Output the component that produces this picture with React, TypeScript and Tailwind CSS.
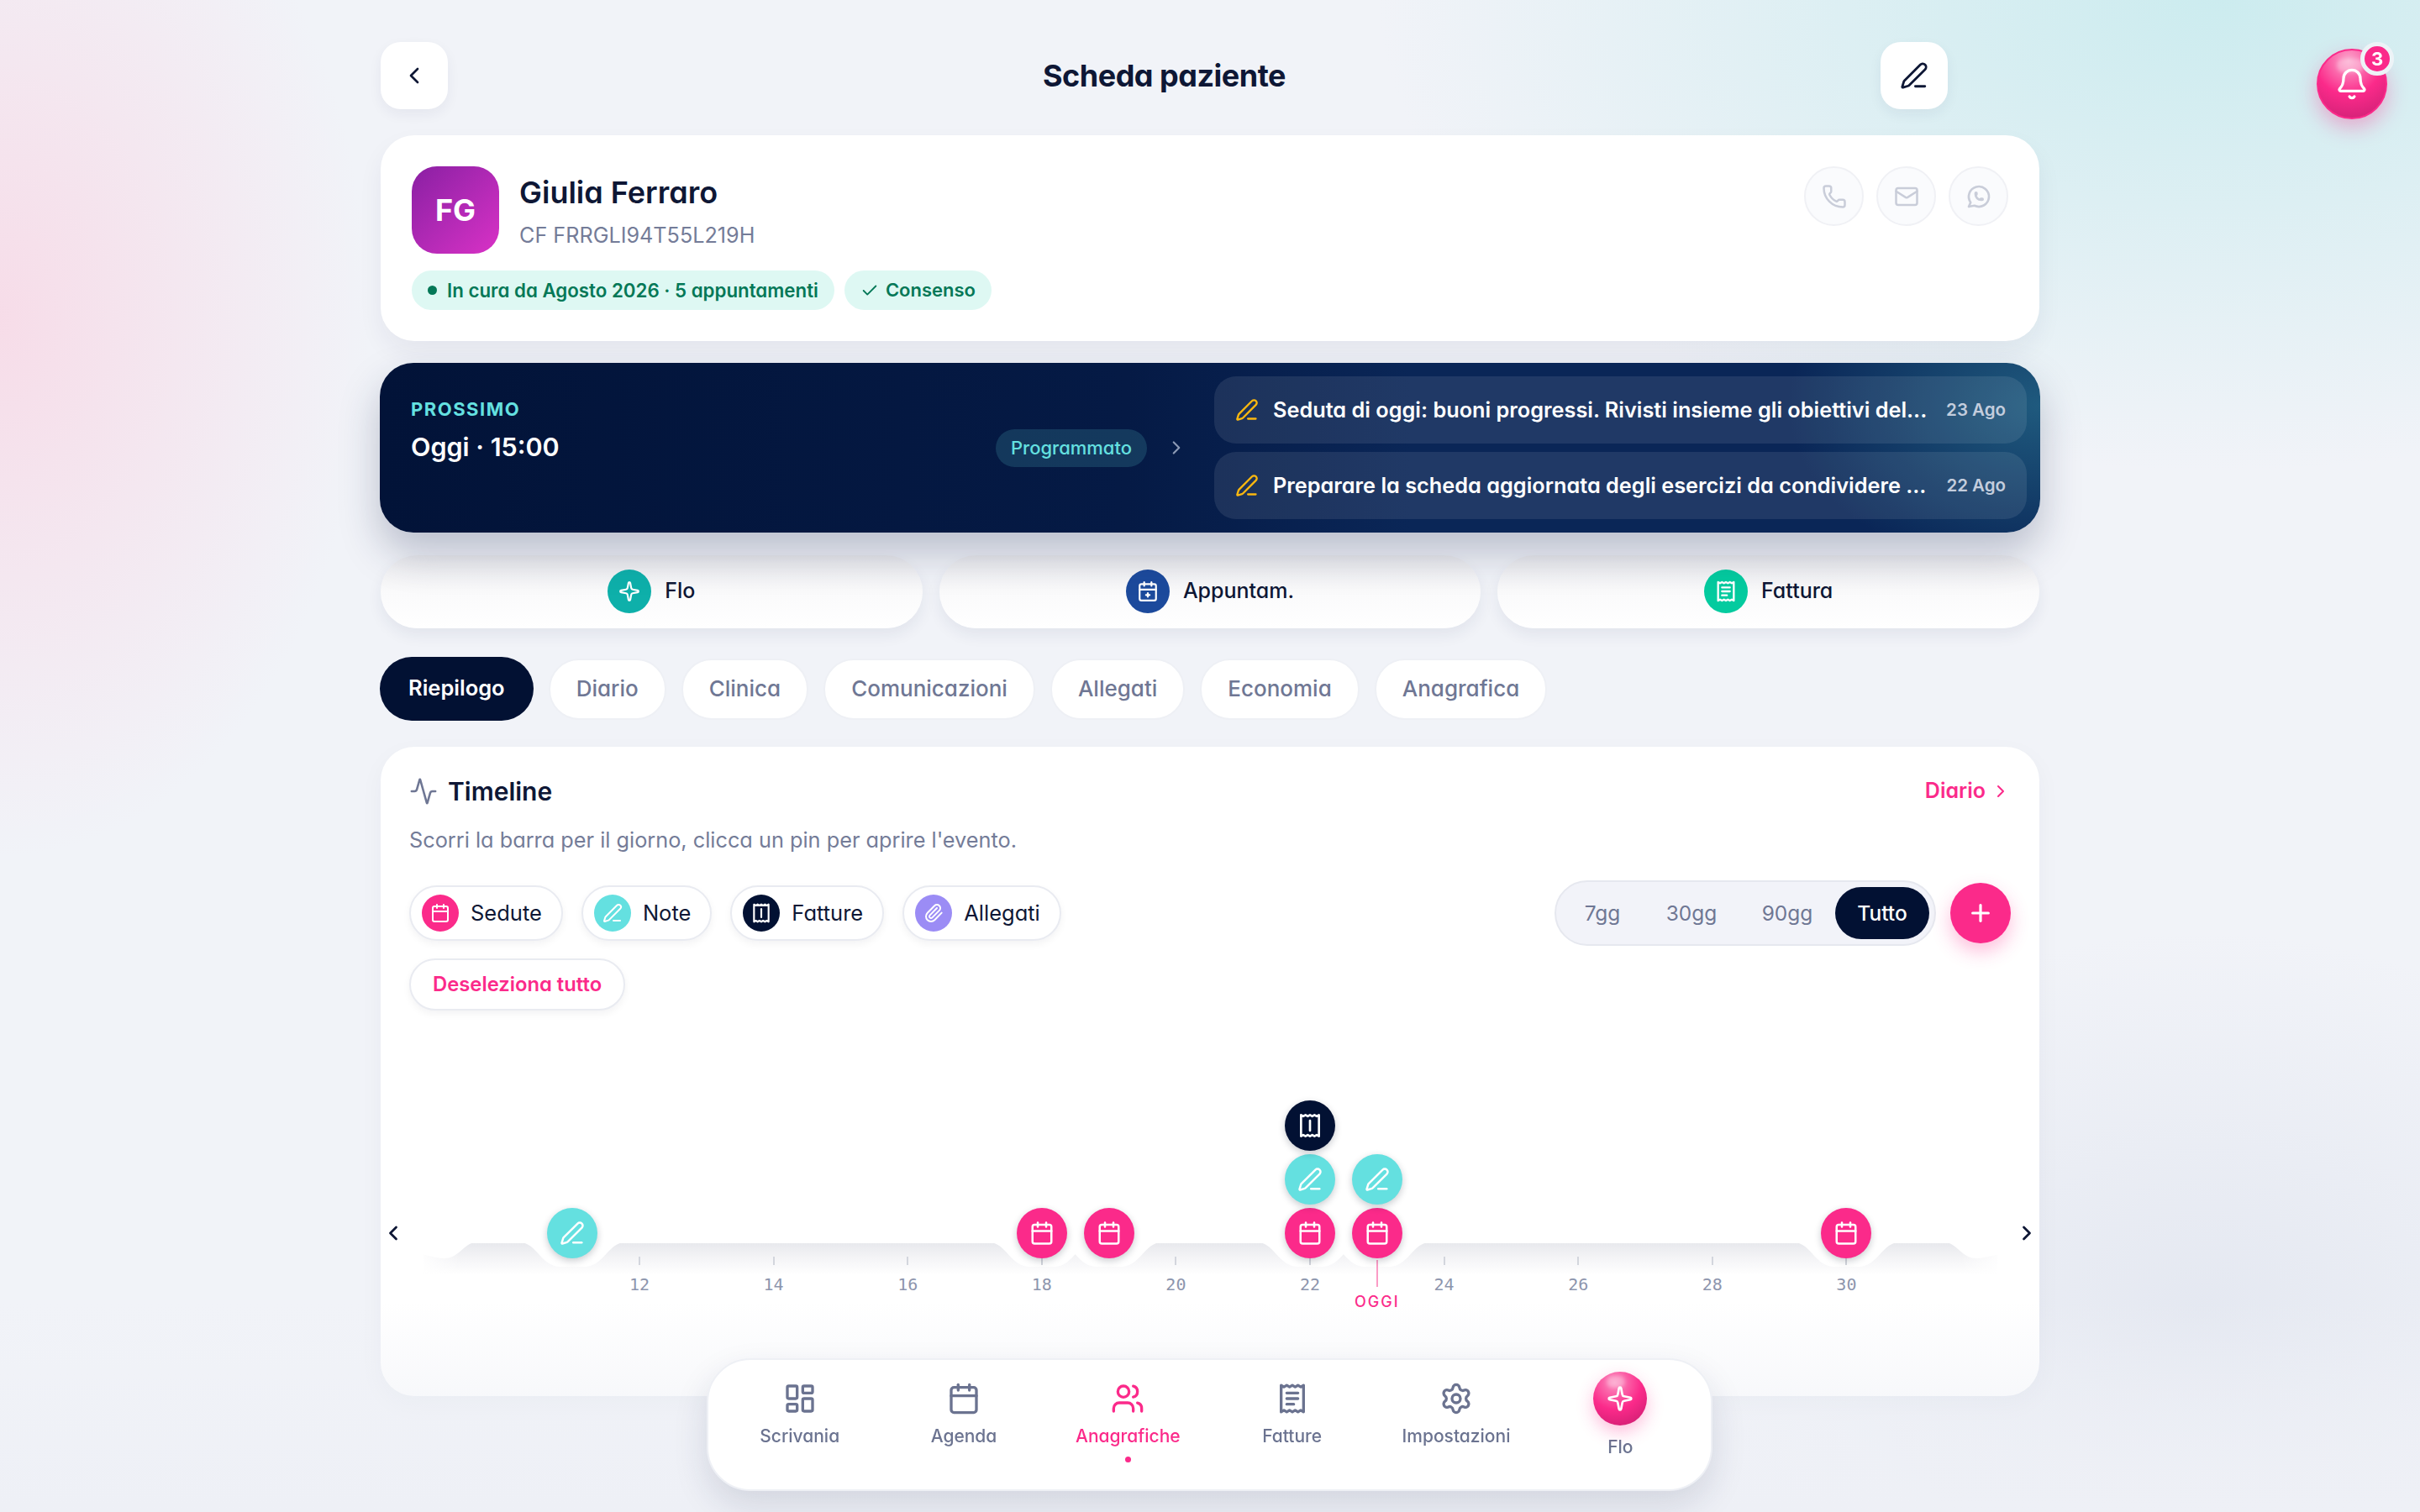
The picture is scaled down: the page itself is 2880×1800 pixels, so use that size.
import React from 'react';
import {
    Activity, Bell, Calendar, CalendarPlus2, Check, ChevronLeft, ChevronRight, LayoutDashboard, Mail,
    Paperclip, PenLine, Phone, Plus, Settings, Sparkle, Users,
} from 'lucide-react';
import { TbBrandWhatsapp } from 'react-icons/tb';

const DAYS = [12, 14, 16, 18, 20, 22, 24, 26, 28, 30];
const DAY_WIDTH = 79.8;
const DAY_ZERO_X = 761 - 12 * DAY_WIDTH - 453;

type Kind = 'cal' | 'note' | 'bill';

const PINS: { day: number; stack: Kind[] }[] = [
    { day: 11, stack: ['note'] },
    { day: 18, stack: ['cal'] },
    { day: 19, stack: ['cal'] },
    { day: 22, stack: ['cal', 'note', 'bill'] },
    { day: 23, stack: ['cal', 'note'] },
    { day: 30, stack: ['cal'] },
];

const dayX = (day: number) => DAY_ZERO_X + day * DAY_WIDTH;

// Receipt with zigzag top and bottom: a single bar, or text lines
function Receipt({ size, lines }: { size: number; lines?: boolean }) {
    return (
        <svg width={size} height={size} viewBox="0 0 24 24" fill="none" stroke="currentColor" strokeWidth={2} strokeLinejoin="round" strokeLinecap="round">
            <path d="M4 2.5l2 1.2 2-1.2 2 1.2 2-1.2 2 1.2 2-1.2 2 1.2 2-1.2V21.5l-2-1.2-2 1.2-2-1.2-2 1.2-2-1.2-2 1.2-2-1.2-2 1.2Z" />
            {lines ? <path d="M8 8h8M8 12h8M8 16h5" /> : <path d="M12 7.5v9" />}
        </svg>
    );
}

function PinIcon({ kind }: { kind: Kind }) {
    if (kind === 'cal') return <Calendar size={30} strokeWidth={2} />;
    if (kind === 'note') return <PenLine size={30} strokeWidth={2} />;
    return <Receipt size={32} />;
}

const pinColor: Record<Kind, string> = {
    cal: 'bg-[#fb2a8a]',
    note: 'bg-[#64e0e0]',
    bill: 'bg-[#021133]',
};

function Chip({ label, color, icon }: { label: string; color: string; icon: React.ReactNode }) {
    return (
        <button className="flex items-center h-[66px] pl-[13px] pr-[23px] gap-[14px] rounded-full bg-white border-2 border-[#e9ebf1] shadow-[0_4px_10px_rgba(15,23,42,0.05)] text-[25.5px] text-[#0e1735]">
            <span className={`w-[44px] h-[44px] rounded-full flex items-center justify-center text-white ${color}`}>{icon}</span>
            {label}
        </button>
    );
}

function QuickAction({ label, color, icon }: { label: string; color: string; icon: React.ReactNode }) {
    return (
        <button className="flex-1 h-[87px] pb-[2px] rounded-[44px] flex items-center justify-center gap-[16px] bg-gradient-to-b from-[#ebebee] via-[#fafafb] to-white shadow-[0_8px_18px_rgba(30,41,80,0.07)] text-[25px] font-medium text-[#0e1735]">
            <span className={`w-[52px] h-[52px] rounded-full flex items-center justify-center text-white ${color}`}>{icon}</span>
            {label}
        </button>
    );
}

function NoteRow({ text, date }: { text: string; date: string }) {
    return (
        <div className="flex items-center justify-between h-[80px] px-[25px] rounded-[26px] bg-[#ffffff17]">
            <div className="flex items-center gap-[17px]">
                <PenLine size={28} strokeWidth={2} className="text-[#fbb80f] shrink-0" />
                <span className="whitespace-nowrap text-[25.3px] font-semibold text-white">{text}</span>
            </div>
            <span className="text-[20.5px] font-semibold text-[#c3cddd] shrink-0">{date}</span>
        </div>
    );
}

function NavItem({ label, icon, active }: { label: string; icon: React.ReactNode; active?: boolean }) {
    return (
        <div className={`flex flex-col items-center pt-[26px] ${active ? 'text-[#fb2a8a]' : 'text-[#6b7390]'}`}>
            {icon}
            <span className="mt-[11px] text-[21px] leading-[28px] font-medium">{label}</span>
            {active && <span className="mt-[10px] w-[7px] h-[7px] rounded-full bg-[#fb2a8a]" />}
        </div>
    );
}

// The grey rail of the timeline with the soft notches around the pins
function Rail() {
    const notch = (x: number) =>
        `M${x - 63} -1 C${x - 42} -1 ${x - 38} 28 ${x - 14} 28 H${x + 14} C${x + 38} 28 ${x + 42} -1 ${x + 63} -1 Z`;
    return (
        <svg width="1947" height="48" viewBox="0 0 1947 48" className="absolute left-[14px] top-0 overflow-visible">
            <defs>
                <linearGradient id="rail" x1="0" y1="0" x2="0" y2="1">
                    <stop offset="0" stopColor="#e8e9ed" />
                    <stop offset="0.5" stopColor="#f5f5f7" />
                    <stop offset="1" stopColor="#ffffff" />
                </linearGradient>
                <linearGradient id="railFade" x1="0" y1="0" x2="1" y2="0">
                    <stop offset="0" stopColor="#ffffff" />
                    <stop offset="1" stopColor="#ffffff" stopOpacity="0" />
                </linearGradient>
            </defs>
            <rect x="37" y="0" width="1873" height="38" fill="url(#rail)" />
            <path d="M24 -1H100C85 -1 80 18 62 18C50 18 37 12 24 12Z" fill="#fff" />
            <path d="M1923 -1H1847C1862 -1 1867 18 1885 18C1897 18 1910 12 1923 12Z" fill="#fff" />
            <rect x="30" y="0" width="50" height="40" fill="url(#railFade)" />
            <rect x="1867" y="0" width="50" height="40" fill="url(#railFade)" transform="rotate(180 1892 20)" />
            {PINS.map((p) => (
                <path key={p.day} d={notch(dayX(p.day) - 14)} fill="#fff" />
            ))}
        </svg>
    );
}

export default function App() {
    return (
        <div className="relative w-full h-screen overflow-hidden bg-[#f1f3f8] text-[#0e1735] font-['Inter',sans-serif] [font-feature-settings:'cv11']">
            {/* soft background tints */}
            <div className="absolute inset-0 bg-[radial-gradient(440px_640px_at_0px_380px,rgba(250,208,224,0.65),transparent)]" />
            <div className="absolute inset-0 bg-[radial-gradient(1000px_560px_at_2640px_0px,rgba(200,235,238,0.9),transparent)]" />
            <div className="absolute inset-0 bg-[radial-gradient(600px_450px_at_2620px_1560px,rgba(205,212,228,0.35),transparent)]" />

            <div className="relative w-[1974px] ml-[453px] pt-[50px]">
                {/* header */}
                <div className="relative flex items-center justify-between h-[80px] pr-[109px]">
                    <button className="w-[80px] h-[80px] rounded-[24px] bg-white flex items-center justify-center shadow-[0_6px_16px_rgba(30,41,80,0.06)]">
                        <ChevronLeft size={32} strokeWidth={2} />
                    </button>
                    <h1 className="text-[36px] font-bold tracking-[-0.5px]">Scheda paziente</h1>
                    <button className="w-[80px] h-[80px] rounded-[24px] bg-white flex items-center justify-center shadow-[0_6px_16px_rgba(30,41,80,0.06)]">
                        <PenLine size={34} strokeWidth={2} />
                    </button>
                </div>

                {/* patient card */}
                <div className="mt-[31px] h-[245px] rounded-[40px] bg-white p-[37px] shadow-[0_14px_30px_rgba(30,41,80,0.06)] flex flex-col">
                    <div className="flex items-start">
                        <div className="w-[104px] h-[104px] rounded-[30px] bg-gradient-to-br from-[#8a1fa3] to-[#d931c6] flex items-center justify-center text-white text-[36px] font-bold">FG</div>
                        <div className="ml-[24px] flex-1 pt-[9px]">
                            <div className="text-[36px] leading-[44px] font-semibold">Giulia Ferraro</div>
                            <div className="mt-[13px] text-[25.2px] leading-[32px] text-[#747c98]">CF FRRGLI94T55L219H</div>
                        </div>
                        <div className="flex gap-[15px]">
                            <span className="w-[71px] h-[71px] rounded-full bg-[#fafbfd] border-2 border-[#f0f1f5] flex items-center justify-center text-[#c9cdd9]"><Phone size={30} strokeWidth={2} /></span>
                            <span className="w-[71px] h-[71px] rounded-full bg-[#fafbfd] border-2 border-[#f0f1f5] flex items-center justify-center text-[#c9cdd9]"><Mail size={30} strokeWidth={2} /></span>
                            <span className="w-[71px] h-[71px] rounded-full bg-[#fafbfd] border-2 border-[#f0f1f5] flex items-center justify-center text-[#c9cdd9]"><TbBrandWhatsapp size={32} /></span>
                        </div>
                    </div>
                    <div className="mt-[20px] flex gap-[12px]">
                        <span className="flex items-center h-[47px] px-[19px] gap-[12px] rounded-full bg-[#def8f3] text-[#047857] text-[22.3px] font-semibold">
                            <span className="w-[11px] h-[11px] rounded-full bg-[#047857]" />In cura da Agosto 2026 · 5 appuntamenti
                        </span>
                        <span className="flex items-center h-[47px] px-[19px] gap-[8px] rounded-full bg-[#def8f3] text-[#047857] text-[22px] font-semibold">
                            <Check size={22} strokeWidth={2} />Consenso
                        </span>
                    </div>
                </div>

                {/* next appointment */}
                <div className="relative mt-[26px] -mx-[1px] h-[202px] rounded-[40px] bg-[radial-gradient(300px_200px_at_100%_25%,#1f5a7e,transparent),linear-gradient(90deg,#021338,#051a45_45%,#0a2657_62%,#0a2657)] pl-[37px] pr-[16px] flex items-center shadow-[0_24px_48px_rgba(30,41,80,0.26)]">
                    <div className="flex-1 self-start pt-[42px]">
                        <div className="text-[22px] leading-[26px] font-bold tracking-[1.5px] text-[#64e0e0]">PROSSIMO</div>
                        <div className="mt-[11px] text-[30.5px] leading-[42px] font-semibold text-white">Oggi · 15:00</div>
                    </div>
                    <span className="h-[45px] px-[18px] rounded-full bg-[#64e0e029] text-[#64e0e0] text-[22px] font-medium flex items-center">Programmato</span>
                    <ChevronRight size={26} strokeWidth={2} className="ml-[22px] mr-[32px] text-[#8c9ab5]" />
                    <div className="w-[967px] flex flex-col gap-[10px]">
                        <NoteRow text="Seduta di oggi: buoni progressi. Rivisti insieme gli obiettivi del..." date="23 Ago" />
                        <NoteRow text="Preparare la scheda aggiornata degli esercizi da condividere ..." date="22 Ago" />
                    </div>
                </div>

                {/* quick actions */}
                <div className="mt-[27px] flex gap-[20px]">
                    <QuickAction label="Flo" color="bg-[#0eb0aa]" icon={<Sparkle size={26} strokeWidth={2} />} />
                    <QuickAction label="Appuntam." color="bg-[#1c4a9c]" icon={<CalendarPlus2 size={26} strokeWidth={2} />} />
                    <QuickAction label="Fattura" color="bg-[#04cb9f]" icon={<Receipt size={28} lines />} />
                </div>

                {/* tabs */}
                <div className="mt-[34px] -ml-[1px] flex items-center gap-[18px] text-[26px] font-medium text-[#6f7794]">
                    <button className="h-[76px] px-[34px] pb-[2px] rounded-[38px] bg-[#021133] text-[25.5px] text-white font-semibold">Riepilogo</button>
                    {['Diario', 'Clinica', 'Comunicazioni', 'Allegati', 'Economia', 'Anagrafica'].map((t) => (
                        <button key={t} className="h-[73px] px-[31px] pb-[2px] rounded-[36px] bg-white border-2 border-[#eef0f5]">{t}</button>
                    ))}
                </div>

                {/* timeline card */}
                <div className="relative mt-[31px] h-[773px] rounded-[40px] bg-white px-[34px] pt-[31px] shadow-[0_10px_30px_rgba(30,41,80,0.04)]">
                    <div className="flex items-center justify-between h-[44px]">
                        <div className="flex items-center gap-[12px]">
                            <Activity size={34} strokeWidth={1.8} className="text-[#6f7794]" />
                            <span className="text-[30px] font-semibold">Timeline</span>
                        </div>
                        <span className="flex items-center gap-[6px] text-[25px] font-semibold text-[#fb2a8a]">Diario<ChevronRight size={24} strokeWidth={2} /></span>
                    </div>
                    <p className="mt-[21px] text-[25.3px] leading-[30px] text-[#747c98]">Scorri la barra per il giorno, clicca un pin per aprire l'evento.</p>

                    <div className="mt-[33px] flex items-start justify-between">
                        <div>
                            <div className="flex gap-[22px] mt-[6px]">
                                <Chip label="Sedute" color="bg-[#fb2a8a]" icon={<Calendar size={24} strokeWidth={2} />} />
                                <Chip label="Note" color="bg-[#64e0e0]" icon={<PenLine size={24} strokeWidth={2} />} />
                                <Chip label="Fatture" color="bg-[#021133]" icon={<Receipt size={26} />} />
                                <Chip label="Allegati" color="bg-[#9b8cf5]" icon={<Paperclip size={24} strokeWidth={2} />} />
                            </div>
                            <button className="mt-[21px] h-[62px] px-[26px] rounded-full bg-white border-2 border-[#e9ebf1] shadow-[0_4px_10px_rgba(15,23,42,0.05)] text-[23.8px] font-semibold text-[#fb2a8a]">Deseleziona tutto</button>
                        </div>
                        <div className="flex items-center gap-[17px]">
                            <div className="flex items-center h-[78px] px-[6px] rounded-full bg-[#f2f3f9] border-2 border-[#e6e8ef] text-[24.5px] text-[#6f7794]">
                                <span className="w-[98px] text-center">7gg</span>
                                <span className="w-[114px] text-center">30gg</span>
                                <span className="w-[114px] text-center">90gg</span>
                                <span className="w-[112px] h-[62px] rounded-full bg-[#021133] text-white font-medium flex items-center justify-center">Tutto</span>
                            </div>
                            <button className="w-[72px] h-[72px] rounded-full bg-[#fb2a8a] text-white flex items-center justify-center shadow-[0_10px_22px_rgba(251,42,138,0.3)]"><Plus size={32} strokeWidth={2.4} /></button>
                        </div>
                    </div>

                    {/* chart */}
                    <div className="relative -mx-[34px] mt-[277px] h-[120px]">
                        <Rail />
                        <ChevronLeft size={28} strokeWidth={2.4} className="absolute left-[1px] -top-[26px]" />
                        <ChevronRight size={28} strokeWidth={2.4} className="absolute right-[1px] -top-[26px]" />
                        {DAYS.map((d) => (
                            <div key={d} className="absolute top-[16px] flex flex-col items-center w-[40px] -ml-[20px]" style={{ left: dayX(d) }}>
                                <span className="w-[2px] h-[10px] bg-[#d3d6dd]" />
                                <span className="mt-[11px] text-[20px] leading-[24px] text-[#8d95ad] font-['DejaVu_Sans_Mono',monospace]">{d}</span>
                            </div>
                        ))}
                        <div className="absolute top-[20px] flex flex-col items-center w-[80px] -ml-[40px]" style={{ left: dayX(23) }}>
                            <span className="w-[2px] h-[32px] bg-[#fb9cc6]" />
                            <span className="mt-[7px] text-[18px] leading-[22px] font-medium tracking-[2px] text-[#fb2a8a]">OGGI</span>
                        </div>
                        {PINS.map((p) =>
                            p.stack.map((k, i) => (
                                <span
                                    key={`${p.day}-${k}`}
                                    className={`absolute w-[60px] h-[60px] -ml-[30px] rounded-full flex items-center justify-center text-white shadow-[0_3px_8px_rgba(15,23,42,0.22)] ${pinColor[k]}`}
                                    style={{ left: dayX(p.day), top: -42 - i * 64 }}
                                >
                                    <PinIcon kind={k} />
                                </span>
                            ))
                        )}
                    </div>
                </div>
            </div>

            {/* fade under the bottom bar */}
            <div className="absolute left-0 right-0 bottom-0 h-[250px] bg-gradient-to-b from-transparent to-[#eef0f6]" />

            {/* bottom nav */}
            <nav className="fixed left-[841px] bottom-[25px] w-[1197px] h-[158px] pl-[11px] pr-[10px] rounded-[52px] bg-white border-2 border-[#eef0f5] shadow-[0_18px_40px_rgba(30,41,80,0.13)] grid grid-cols-6">
                <NavItem label="Scrivania" icon={<LayoutDashboard size={40} strokeWidth={2} />} />
                <NavItem label="Agenda" icon={<Calendar size={40} strokeWidth={2} />} />
                <NavItem label="Anagrafiche" active icon={<Users size={40} strokeWidth={2} />} />
                <NavItem label="Fatture" icon={<Receipt size={40} lines />} />
                <NavItem label="Impostazioni" icon={<Settings size={40} strokeWidth={2} />} />
                <div className="flex flex-col items-center pt-[14px] text-[#6b7390]">
                    <span className="relative w-[64px] h-[64px] rounded-full bg-[radial-gradient(circle_at_40%_20%,#fb8fc0,#fb2a8a_50%,#c51a6c)] flex items-center justify-center text-white shadow-[0_8px_20px_rgba(251,42,138,0.3)]">
                        <span className="absolute left-[16px] top-[5px] w-[22px] h-[14px] rounded-full bg-white/30 blur-[2px]" />
                        <Sparkle size={32} strokeWidth={2} />
                    </span>
                    <span className="mt-[12px] text-[21px] leading-[28px] font-medium">Flo</span>
                </div>
            </nav>

            {/* notifications */}
            <button className="fixed left-[2757px] top-[58px] w-[84px] h-[84px] rounded-full bg-[radial-gradient(circle_at_45%_15%,#fba5cc,#fb2a8a_50%,#c81f72)] border-2 border-[#fb2a8a] flex items-center justify-center text-white shadow-[0_10px_24px_rgba(251,42,138,0.35)]">
                <span className="absolute left-[22px] top-[10px] w-[32px] h-[16px] rounded-full bg-white/30 blur-[2px]" />
                <Bell size={40} strokeWidth={2} className="relative" />
                <span className="absolute -top-[10px] -right-[10px] w-[40px] h-[40px] rounded-full bg-[#fb2a8a] border-[5px] border-[#edf3f7] flex items-center justify-center text-[22px] font-bold">3</span>
            </button>
        </div>
    );
}
